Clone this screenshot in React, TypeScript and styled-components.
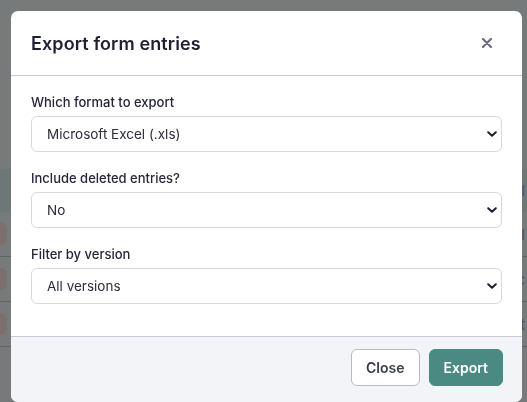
import { createGlobalStyle } from 'styled-components'
import styled from 'styled-components'

const GlobalStyle = createGlobalStyle`
    * {
        box-sizing: border-box;
    }
    html, body {
        margin: 0;
        padding: 0;
        font-family: Inter, 'Noto Sans', sans-serif;
        background-color: #ecf4f4;
    }
`

// rows of the page behind the dialog, only their edges show
const rows = ['l', 'c', 't']

function ExportModal() {
    return (
        <Modal>
            <Header>
                <Title>Export form entries</Title>
                <CloseIcon type="button" aria-label="Close">
                    <svg width="10" height="10" viewBox="0 0 10 10">
                        <path d="M1 1L9 9M9 1L1 9" stroke="#6b6e7e" strokeWidth="2.2" strokeLinecap="round" />
                    </svg>
                </CloseIcon>
            </Header>
            <Body>
                <Field>
                    <Label>Which format to export</Label>
                    <SelectWrap>
                        <Select defaultValue="xls">
                            <option value="xls">Microsoft Excel (.xls)</option>
                            <option value="csv">CSV (.csv)</option>
                        </Select>
                        <Chevron />
                    </SelectWrap>
                </Field>
                <Field>
                    <Label>Include deleted entries?</Label>
                    <SelectWrap>
                        <Select defaultValue="no">
                            <option value="no">No</option>
                            <option value="yes">Yes</option>
                        </Select>
                        <Chevron />
                    </SelectWrap>
                </Field>
                <Field>
                    <Label>Filter by version</Label>
                    <SelectWrap>
                        <Select defaultValue="all">
                            <option value="all">All versions</option>
                        </Select>
                        <Chevron />
                    </SelectWrap>
                </Field>
            </Body>
            <Footer>
                <Button>Close</Button>
                <Button $primary>Export</Button>
            </Footer>
        </Modal>
    )
}

function Chevron() {
    return (
        <ChevronSvg width="10" height="6" viewBox="0 0 10 6">
            <path d="M1.2 1.2L5 4.8L8.8 1.2" stroke="#1e2030" strokeWidth="2" fill="none" strokeLinecap="round" strokeLinejoin="round" />
        </ChevronSvg>
    )
}

function App() {
    return (
        <>
            <GlobalStyle />
            <Page>
                <Table>
                    <TableHead>
                        <HeadText>l</HeadText>
                    </TableHead>
                    {rows.map((tail, i) => (
                        <Row key={i}>
                            <Badge />
                            <RowText>{tail}</RowText>
                        </Row>
                    ))}
                </Table>
            </Page>
            <Overlay>
                <ExportModal />
            </Overlay>
        </>
    )
}

export default App

const Page = styled.div`
    min-height: 100vh;
    padding-top: 169px;
    overflow: hidden;
`

const Table = styled.div`
    display: flex;
    flex-direction: column;
`

const TableHead = styled.div`
    display: flex;
    justify-content: flex-end;
    align-items: center;
    height: 43px;
    background-color: #dceef0;
    padding-right: 2px;
`

const HeadText = styled.div`
    font-size: 15px;
    color: #7fb0ff;
`

const Row = styled.div`
    display: flex;
    justify-content: space-between;
    align-items: center;
    height: 45px;
    border-bottom: 1px solid #bec6c6;
    padding-right: 2px;
`

const Badge = styled.div`
    width: 60px;
    height: 22px;
    margin-left: -53px;
    border-radius: 6px;
    background-color: #f8dedc;
`

const RowText = styled.div`
    font-size: 15px;
    color: #7fa8e0;
`

const Overlay = styled.div`
    position: fixed;
    inset: 0;
    background-color: rgba(0, 0, 0, 0.5);
    padding: 11px 5px 0 11px;
    overflow: hidden;
`

const Modal = styled.div`
    width: 511px;
    background-color: #ffffff;
    border-radius: 7px;
    overflow: hidden;
`

const Header = styled.div`
    display: flex;
    justify-content: space-between;
    align-items: center;
    height: 65px;
    padding: 0 20px;
    border-bottom: 1px solid #c6c9d2;
`

const Title = styled.h2`
    margin: 0;
    font-size: 18px;
    font-weight: 600;
    color: #1e2030;
    letter-spacing: 0.1px;
`

const CloseIcon = styled.button`
    display: flex;
    justify-content: center;
    align-items: center;
    width: 30px;
    height: 30px;
    padding: 0;
    border: none;
    background: none;
    cursor: pointer;
`

const Body = styled.div`
    padding: 16px 20px 32px;
    display: flex;
    flex-direction: column;
    gap: 16px;
`

const Field = styled.div`
    display: flex;
    flex-direction: column;
    gap: 4px;
`

const Label = styled.label`
    font-size: 13px;
    line-height: 20px;
    font-weight: 500;
    color: #24263a;
`

const SelectWrap = styled.div`
    position: relative;
`

const Select = styled.select`
    width: 100%;
    height: 36px;
    padding: 0 30px 0 15px;
    border: 1px solid #d6d8de;
    border-radius: 6px;
    background-color: #ffffff;
    font-family: inherit;
    font-size: 13.5px;
    color: #2b2d3a;
    appearance: none;
    outline: none;
`

const ChevronSvg = styled.svg`
    position: absolute;
    right: 5px;
    top: 15px;
    pointer-events: none;
`

const Footer = styled.div`
    display: flex;
    justify-content: flex-end;
    gap: 9px;
    padding: 12px 19px 16px;
    background-color: #f3f4f8;
    border-top: 1px solid #c8cbd6;
`

const Button = styled.button<{ $primary?: boolean }>`
    height: 37px;
    padding: 0 14px;
    border-radius: 6px;
    font-family: inherit;
    font-size: 14px;
    font-weight: 600;
    cursor: pointer;
    border: 1px solid ${p => (p.$primary ? '#4a8a82' : '#b8bac6')};
    background-color: ${p => (p.$primary ? '#4a8a82' : '#ffffff')};
    color: ${p => (p.$primary ? '#ffffff' : '#3b3e4c')};
`
